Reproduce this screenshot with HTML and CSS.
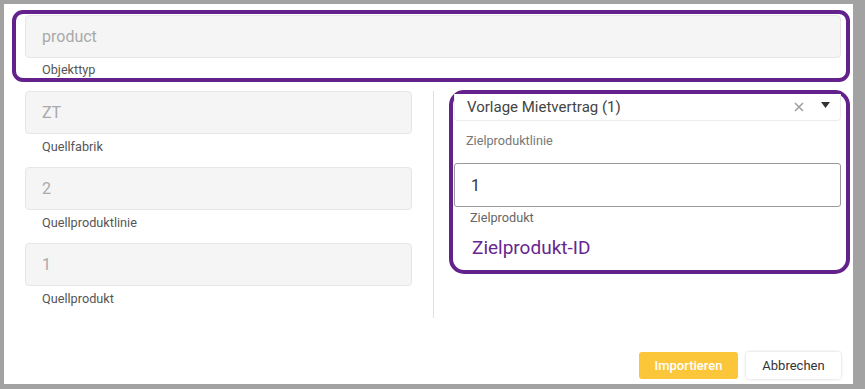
FILE: index.html
```html
<!DOCTYPE html>
<html lang="de">
<head>
    <meta charset="UTF-8">
    <meta name="viewport" content="width=device-width, initial-scale=1.0">
    <title>Import</title>
    <link rel="stylesheet" href="styles.css">
</head>
<body>
    <div class="dialog">
        <div class="mark mark-top">
            <div class="field-box">product</div>
            <div class="field-label">Objekttyp</div>
        </div>

        <div class="columns">
            <div class="col col-left">
                <div class="field-box">ZT</div>
                <div class="field-label">Quellfabrik</div>

                <div class="field-box">2</div>
                <div class="field-label">Quellproduktlinie</div>

                <div class="field-box">1</div>
                <div class="field-label">Quellprodukt</div>
            </div>

            <div class="col col-right">
                <div class="mark mark-right">
                    <div class="select">
                        <span class="select-value">Vorlage Mietvertrag (1)</span>
                        <svg class="select-clear" width="10" height="10" viewBox="0 0 10 10">
                            <path d="M1 1 L9 9 M9 1 L1 9" stroke="#a0a0a0" stroke-width="1.6" fill="none"/>
                        </svg>
                        <svg class="select-arrow" width="9" height="6" viewBox="0 0 9 6">
                            <path d="M0 0 H9 L4.5 6 Z" fill="#333"/>
                        </svg>
                    </div>
                    <div class="target-label">Zielproduktlinie</div>
                    <input type="text" class="target-input" value="1">
                    <div class="target-sub">Zielprodukt</div>
                    <div class="target-id">Zielprodukt-ID</div>
                </div>
            </div>
        </div>

        <div class="actions">
            <button class="btn btn-primary">Importieren</button>
            <button class="btn btn-cancel">Abbrechen</button>
        </div>
    </div>
</body>
</html>
```

FILE: styles.css
```css
body {
    margin: 0;
    background-color: #a2a2a2;
    font-family: Roboto, "Liberation Sans", Arial, sans-serif;
}
.dialog {
    box-sizing: border-box;
    width: 849px;
    height: 380px;
    margin: 4px 0 0 4px;
    padding: 6px 12px 5px 21px;
    background: white;
    display: flex;
    flex-direction: column;
}
.mark {
    border: 4px solid #65218b;
    border-radius: 11px;
}
.mark-top {
    margin: 0 -9px 0 -13px;
    padding: 1px 5px 1px 9px;
}
.field-box {
    box-sizing: border-box;
    height: 43px;
    padding: 0 16px;
    line-height: 41px;
    font-size: 16px;
    color: #a9a9a9;
    background-color: #f5f5f5;
    border: 1px solid #e6e6e6;
    border-radius: 4px;
}
.field-label {
    margin: 6px 0 13px 17px;
    font-size: 12.7px;
    line-height: 14px;
    color: #555;
}
.mark-top .field-label {
    margin-top: 5px;
    margin-bottom: 0;
}
.columns {
    display: flex;
    margin-top: 9px;
    height: 227px;
}
.col {
    flex: 1;
}
.col-left {
    padding-right: 21px;
}
.col-right {
    border-left: 1px solid #e0e0e0;
    padding-left: 20px;
}
.mark-right {
    margin: -1px -9px 0 -5px;
    padding: 0 5px 11px 1px;
    border-radius: 15px;
}
.select {
    box-sizing: border-box;
    height: 27px;
    display: flex;
    align-items: center;
    padding: 0 10px 0 12px;
    background: white;
    border: 1px solid #ececec;
    border-top: none;
    border-radius: 0 0 4px 4px;
}
.select-value {
    flex: 1;
    font-size: 15px;
    color: #444;
}
.select-clear {
    margin-right: 17px;
}
.select-arrow {
    margin-top: -4px;
}
.target-label {
    margin: 12px 0 14px 12px;
    font-size: 12.7px;
    line-height: 16px;
    color: #777;
}
.target-input {
    display: block;
    box-sizing: border-box;
    width: 100%;
    height: 44px;
    margin: 0;
    padding: 0 16px;
    font-family: inherit;
    font-size: 16px;
    color: #333;
    border: 1px solid #9a9a9a;
    border-radius: 3px;
    outline: none;
}
.target-sub {
    margin: 4px 0 0 16px;
    font-size: 12.7px;
    line-height: 14px;
    color: #666;
}
.target-id {
    margin: 11px 0 0 18px;
    font-size: 19px;
    line-height: 23px;
    color: #68268f;
}
.actions {
    margin-top: auto;
    display: flex;
    justify-content: flex-end;
    gap: 8px;
}
.btn {
    height: 27px;
    border: none;
    border-radius: 3px;
    font-family: inherit;
    font-size: 13px;
    cursor: pointer;
}
.btn-primary {
    width: 99px;
    background-color: #fcc63b;
    color: white;
    font-weight: 500;
}
.btn-cancel {
    width: 95px;
    background: white;
    color: #333;
    box-shadow: 0 0 3px rgba(0,0,0,0.2);
}
```
